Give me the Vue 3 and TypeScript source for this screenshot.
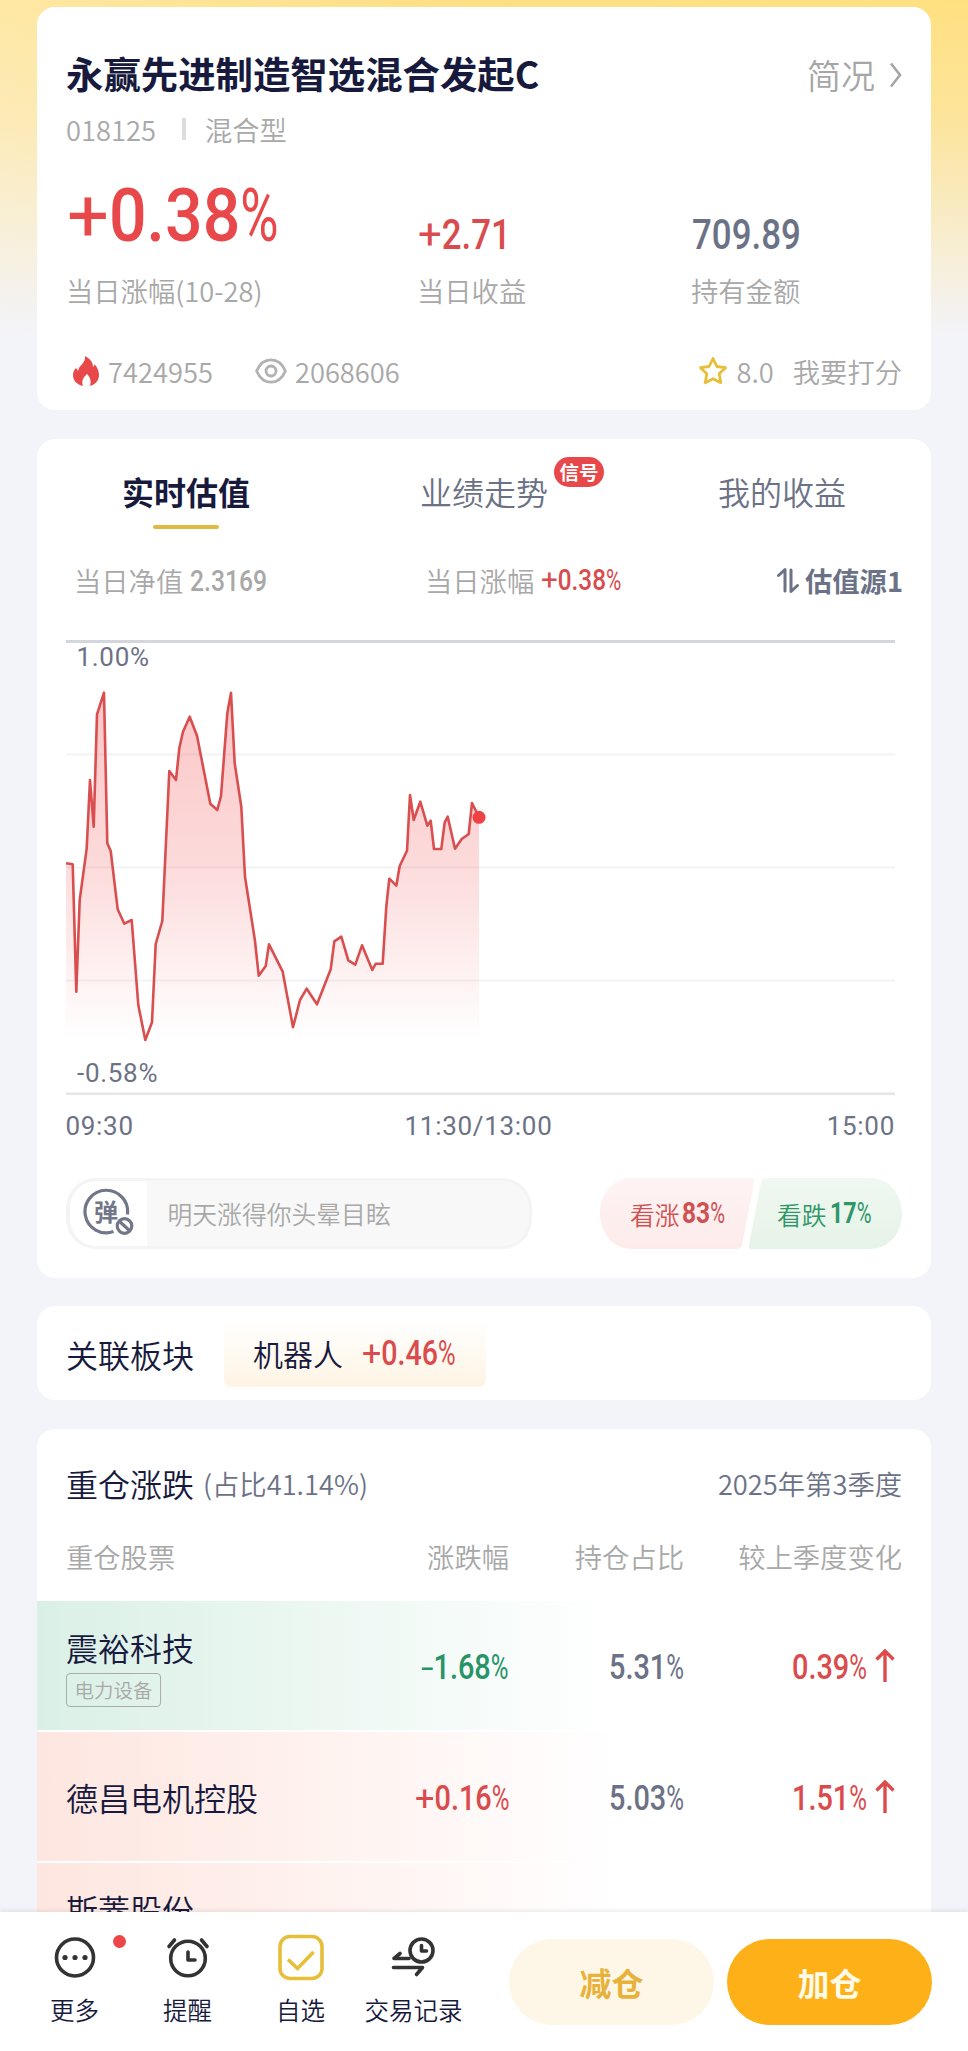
<script setup lang="ts">
import { h } from 'vue'

interface NumProps {
  value: string
  size: number
  weight?: number
  digit?: number
}

// Condensed figures: every run (sign, digits, percent) has its own advance width.
const Num = (props: NumProps) => {
  const { value, size, weight = 500, digit = 0.462 } = props
  const match = value.match(/^([+-]?)([\d.]+)(%?)$/)
  const [, sign, digits, pct] = match ?? ['', '', value, '']
  const dots = digits.split('.').length - 1
  const runs = [
    { t: sign, w: sign === '-' ? 0.36 : 0.56, k: 400 },
    { t: digits, w: (digits.length - dots) * digit + dots * 0.22, k: weight },
    { t: pct, w: 0.51, k: 400 },
  ].filter((r) => r.t)
  let x = 0
  const nodes = runs.map((r) => {
    const node = h(
      'text',
      { x, y: size * 0.711, 'font-weight': r.k, textLength: r.w * size, lengthAdjust: 'spacingAndGlyphs' },
      r.t,
    )
    x += r.w * size
    return node
  })
  return h('svg', { class: 'num', width: x, height: size * 0.711, 'font-size': size }, nodes)
}
Num.props = ['value', 'size', 'weight', 'digit']

const series: [number, number][] = [
  [0, 223.3], [6.7, 224.3], [10.3, 351.7], [13.7, 260], [20.7, 208.3], [24, 140], [27.7, 186.7],
  [31, 74.3], [38, 52.7], [41.3, 203.3], [44.7, 211], [51.7, 269.3], [58.3, 283.7], [65.7, 280],
  [72.3, 365], [79.3, 400], [86, 382.3], [89.7, 304], [96.3, 281], [103.3, 131], [110, 140],
  [113.3, 108.3], [117, 91.7], [123.7, 76.7], [131, 95.7], [144.3, 163.7], [151.3, 170], [155, 156],
  [161.3, 73.3], [165, 52.7], [168.7, 123.3], [175.3, 166.7], [179, 236.7], [189, 301],
  [192.7, 335.7], [199.7, 326], [203, 304.3], [216.7, 331.7], [227, 387.3], [234, 360],
  [240.7, 348.7], [251, 364.3], [264.7, 329.3], [268.3, 301.3], [275.3, 296.7], [282.3, 320.3],
  [289.3, 324.7], [296, 305.3], [306.3, 330], [309.7, 323.7], [316.7, 323.7], [320.3, 266.7],
  [323.3, 238.7], [330.3, 245.7], [333.7, 226], [341, 210.7], [344, 155], [347.7, 180],
  [354.3, 161.7], [361.3, 185.7], [364.7, 180.7], [368, 209], [375.3, 209], [378.7, 182.3],
  [381.7, 176.7], [389, 208.7], [395.7, 199], [402.7, 194], [406, 163], [413, 177.3],
]
const line = series.map((p) => p.join(',')).join(' ')
const area = `0,400 ${line} 413,400`

const metrics = [
  { value: '+0.38%', label: '当日涨幅(10-28)', size: 75, tone: 'up', big: true },
  { value: '+2.71', label: '当日收益', size: 42.5, tone: 'up', big: false },
  { value: '709.89', label: '持有金额', size: 42.5, tone: 'slate', big: false },
]

const stocks = [
  { name: '震裕科技', tag: '电力设备', change: '-1.68%', share: '5.31%', diff: '0.39%', tone: 'down' },
  { name: '德昌电机控股', tag: '', change: '+0.16%', share: '5.03%', diff: '1.51%', tone: 'up' },
  { name: '斯菱股份', tag: '电力设备', change: '', share: '', diff: '', tone: 'up' },
]
</script>

<template>
  <div class="page">
    <main class="content">
      <section class="card summary">
        <div class="title-row">
          <h1>永赢先进制造智选混合发起C</h1>
          <a class="brief">
            简况
            <svg width="13" height="26" viewBox="0 0 13 26"><path d="M2 1.5 11 13 2 24.5" /></svg>
          </a>
        </div>
        <div class="sub-row"><span>018125</span><i></i><span>混合型</span></div>
        <div class="metrics">
          <div v-for="m in metrics" :key="m.label" class="metric" :class="{ big: m.big }">
            <Num :class="m.tone" :value="m.value" :size="m.size" :digit="m.big ? 0.51 : 0.468" />
            <span>{{ m.label }}</span>
          </div>
        </div>
        <div class="stats">
          <svg class="flame" width="26" height="30" viewBox="0 0 26 30">
            <path d="M12 0c6 3 8 7 8 11 1-1 1.500-1.500 1.500-3C24.500 12 26 15 26 19c0 5-3 9-9 11 2-6-1-10-3-12-3 3-6 6-4 12C3 28 0 24 0 19c0-3 1-5 3-7 1 1 1.500 2 2 3C6 9 13 7 12 0Z" />
          </svg>
          <span class="heat">7424955</span>
          <svg class="eye" width="32" height="26" viewBox="0 0 32 26">
            <path d="M1.600 13C5 5 10 1.800 16 1.800S27 5 30.400 13C27 21 22 24.200 16 24.200S5 21 1.600 13Z" />
            <circle cx="16" cy="13" r="5" />
          </svg>
          <span>2068606</span>
          <svg class="star" width="30" height="30" viewBox="0 0 30 30">
            <path d="m15 2.500 3.900 8 8.600 1.200-6.300 6.100 1.600 8.900L15 22.700l-7.800 4 1.600-8.900-6.300-6.100 8.600-1.200Z" />
          </svg>
          <span class="score">8.0</span>
          <span>我要打分</span>
        </div>
      </section>

      <section class="card trend">
        <nav class="tabs">
          <div class="tab active"><span>实时估值</span></div>
          <div class="tab"><span>业绩走势<b class="badge">信号</b></span></div>
          <div class="tab"><span>我的收益</span></div>
        </nav>
        <div class="quote">
          <div class="nav-value">当日净值<Num value="2.3169" :size="29.500" :digit="0.478" /></div>
          <div class="nav-change">当日涨幅<Num class="up" value="+0.38%" :size="30" /></div>
          <div class="source">
            <svg width="22" height="27" viewBox="0 0 22 27">
              <path d="M1.500 8.500 8 2.500V24M14 3v21.500l6.500-6" />
            </svg>
            估值源1
          </div>
        </div>
        <svg class="chart" width="829" height="504" viewBox="0 0 829 504">
          <defs>
            <linearGradient id="fade" x1="0" y1="52" x2="0" y2="400" gradientUnits="userSpaceOnUse">
              <stop offset="0" stop-color="#f24a4c" stop-opacity=".32" />
              <stop offset=".5" stop-color="#f24a4c" stop-opacity=".2" />
              <stop offset="1" stop-color="#f24a4c" stop-opacity="0" />
            </linearGradient>
          </defs>
          <path class="grid" d="M0 114.500H829M0 227.500H829M0 340.500H829" />
          <path class="edge top" d="M0 1.500H829" />
          <path class="edge" d="M0 453.700H829" />
          <polygon :points="area" fill="url(#fade)" />
          <polyline class="curve" :points="line" />
          <circle cx="413" cy="177.300" r="6.500" class="dot" />
          <text x="10.500" y="26">1.00%</text>
          <text x="11" y="442">-0.58%</text>
          <text x="-0.500" y="495">09:30</text>
          <text x="412.500" y="495" text-anchor="middle">11:30/13:00</text>
          <text x="829" y="495" text-anchor="end">15:00</text>
        </svg>
        <div class="vote-row">
          <div class="danmu">
            <div class="danmu-switch">
              <svg width="54" height="50" viewBox="0 0 54 50">
                <path d="M45.400 26.500A21.300 21.300 0 1 0 31.500 43.600" />
                <circle cx="42.500" cy="38" r="7.300" />
                <path d="m37.300 33.200 10.400 9.600" />
                <text x="24" y="32.500" text-anchor="middle">弹</text>
              </svg>
            </div>
            <span>明天涨得你头晕目眩</span>
          </div>
          <div class="votes">
            <svg class="vote-bg" width="302" height="71" viewBox="0 0 302 71">
              <defs>
                <linearGradient id="bull" x1="0" y1="0" x2="0" y2="1">
                  <stop offset="0" stop-color="#fef3f3" /><stop offset="1" stop-color="#fdebeb" />
                </linearGradient>
                <linearGradient id="bear" x1="0" y1="0" x2="0" y2="1">
                  <stop offset="0" stop-color="#f0f8f1" /><stop offset="1" stop-color="#e6f3e8" />
                </linearGradient>
              </defs>
              <path fill="url(#bull)" d="M32 0H150Q155 0 154 5L142 67Q141 71 137 71H32C14 71 0 56 0 35.500S14 0 32 0Z" />
              <path fill="url(#bear)" d="M166 0H270C288 0 302 15 302 35.500S288 71 270 71H152Q148 71 149 67L161 4Q162 0 166 0Z" />
            </svg>
            <div class="vote bull">看涨<Num value="83%" :size="29" :weight="700" :digit="0.485" /></div>
            <div class="vote bear">看跌<Num value="17%" :size="29" :weight="700" :digit="0.46" /></div>
          </div>
        </div>
      </section>

      <section class="card sector">
        <span class="heading">关联板块</span>
        <div class="chip">机器人<Num class="up" value="+0.46%" :size="34.500" :digit="0.475" /></div>
      </section>

      <section class="card holdings">
        <div class="holdings-title">
          <span class="heading">重仓涨跌</span><span class="ratio">(占比41.14%)</span>
          <span class="quarter">2025年第3季度</span>
        </div>
        <div class="cols head">
          <span>重仓股票</span><span>涨跌幅</span><span>持仓占比</span><span>较上季度变化</span>
        </div>
        <div v-for="s in stocks" :key="s.name" class="cols row" :class="s.tone + '-row'">
          <div class="stock">
            <span class="name">{{ s.name }}</span>
            <span v-if="s.tag" class="tag">{{ s.tag }}</span>
          </div>
          <template v-if="s.change">
            <div><Num :class="s.tone" :value="s.change" :size="34.800" :digit="0.475" /></div>
            <div><Num class="slate" :value="s.share" :size="34.800" :digit="0.475" /></div>
            <div class="diff">
              <Num class="up" :value="s.diff" :size="34.800" :digit="0.475" />
              <svg class="arrow" width="20" height="34" viewBox="0 0 20 34">
                <path d="M10 33V2M1.500 10.500 10 2l8.500 8.500" />
              </svg>
            </div>
          </template>
        </div>
      </section>
    </main>

    <footer class="bar">
      <div class="action">
        <svg width="48" height="48" viewBox="0 0 48 48">
          <circle cx="24" cy="23.500" r="18.500" />
          <g class="solid"><circle cx="14" cy="23.500" r="2.600" /><circle cx="24" cy="23.500" r="2.600" /><circle cx="34" cy="23.500" r="2.600" /></g>
        </svg>
        <span>更多</span>
        <i class="notice"></i>
      </div>
      <div class="action">
        <svg width="48" height="48" viewBox="0 0 48 48">
          <circle cx="24" cy="24.500" r="17.300" />
          <path d="M24 18v8h7M5 12.500 10.500 6M43 12.500 37.500 6" />
        </svg>
        <span>提醒</span>
      </div>
      <div class="action">
        <svg class="gold" width="48" height="48" viewBox="0 0 48 48">
          <rect x="3" y="2.500" width="42" height="42" rx="10" />
          <path d="m11 25.500 9.500 9L36.500 18" />
        </svg>
        <span>自选</span>
      </div>
      <div class="action">
        <svg width="48" height="48" viewBox="0 0 48 48">
          <circle cx="31.500" cy="16.500" r="11.500" />
          <path d="M31.500 11.500v5.500h5M19 24.500H4l6-5M3.500 33.500h29l-6 7" />
        </svg>
        <span>交易记录</span>
      </div>
      <button class="btn reduce">减仓</button>
      <button class="btn add">加仓</button>
    </footer>
  </div>
</template>

<style>
body {
  margin: 0;
}
</style>

<style scoped>
.page {
  width: 968px;
  height: 2051px;
  overflow: hidden;
  display: flex;
  flex-direction: column;
  font-family: 'Noto Sans CJK SC', 'Noto Sans', sans-serif;
  font-weight: 350;
  color: #171a3d;
  background:
    linear-gradient(180deg, rgba(243, 244, 250, 0) 0, rgba(243, 244, 250, 0.22) 120px, #f3f4fa 338px),
    linear-gradient(90deg, #ffe8a4, #ffdf86 45%, #ffe081);
  background-color: #f3f4fa;
}
.content {
  height: 1912px;
  padding: 7px 37px 0;
  box-sizing: border-box;
  overflow: hidden;
}
.card {
  background: #fff;
  border-radius: 18px;
  box-sizing: border-box;
  padding: 0 29px;
}
.up { color: #d94b4d; }
.down { color: #279467; }
.slate { color: #6c7286; }
.num {
  display: block;
  overflow: visible;
  fill: currentColor;
  font-family: Roboto, sans-serif;
  flex: none;
}

.summary { height: 403px; padding-top: 41px; }
.title-row { height: 50px; display: flex; align-items: center; justify-content: space-between; }
h1 { margin: 0; font-size: 37.4px; line-height: 50px; font-weight: 700; }
.brief { display: flex; align-items: center; font-size: 34px; line-height: 50px; color: #a6a6a6; padding: 4px 0 0; }
.brief svg { margin-left: 14px; fill: none; stroke: #a6a6a6; stroke-width: 2.600; }
.sub-row { height: 40px; margin-top: 11px; display: flex; align-items: center; font-size: 27.3px; color: #a8a8a8; }
.sub-row i { width: 4px; height: 22px; margin: 0 19px 0 26px; background: #dcdcdc; }
.metrics { display: grid; grid-template-columns: 351px 274px 1fr; height: 161px; }
.metric { display: flex; flex-direction: column; justify-content: flex-end; font-size: 27.3px; line-height: 40px; color: #a8a8a8; }
.metric .num { margin: 0 0 21px 1px; }
.metric.big .num { margin-bottom: 29px; }
.metric.big .up { color: #e8484a; }
.stats { display: flex; align-items: center; height: 40px; margin-top: 41px; font-size: 27.3px; color: #a8a8a8; }
.flame { fill: #e8484a; margin: 0 9px 0 7px; }
.heat { margin-right: 42px; }
.eye { fill: none; stroke: #b2b2b2; stroke-width: 2.800; margin-right: 8px; }
.star { fill: none; stroke: #e5bf3a; stroke-width: 2.800; stroke-linejoin: round; margin: 0 8px 0 auto; }
.score { margin-right: 19px; }

.trend { height: 839px; margin-top: 29px; }
.tabs { display: grid; grid-template-columns: repeat(3, 1fr); margin: 0 -29px; height: 91px; }
.tab { display: flex; flex-direction: column; align-items: center; padding-top: 27px; font-size: 32px; line-height: 50px; color: #6c7286; }
.tab span { position: relative; }
.tab.active { font-weight: 700; color: #171a3d; }
.tab.active::after { content: ''; width: 66px; height: 4px; border-radius: 2px; margin-top: 9px; background: #dfb943; }
.badge { position: absolute; left: 134px; top: -9px; width: 50px; height: 30px; border-radius: 15px; background: #e8484a; color: #fff; font-size: 19.5px; line-height: 29px; text-align: center; }
.quote { display: flex; align-items: center; height: 40px; margin-top: 30px; font-size: 27.3px; color: #a8a8a8; }
.quote > div { display: flex; align-items: center; }
.quote .num { margin-left: 7px; }
.nav-value { width: 351px; padding-left: 8px; box-sizing: border-box; }
.nav-change { padding-left: 8px; }
.source { margin: 0 -1px 0 auto; color: #6c7286; font-weight: 700; }
.source svg { margin-right: 6px; fill: none; stroke: #6c7286; stroke-width: 3; stroke-linecap: round; stroke-linejoin: round; }
.chart { display: block; margin-top: 40px; overflow: visible; }
.chart text { font: 400 26px Roboto, sans-serif; letter-spacing: 0.7px; fill: #6c7286; }
.grid { stroke: #f1f3f5; stroke-width: 2; }
.edge { stroke: #e4e6ea; stroke-width: 2.500; }
.edge.top { stroke: #d3d6da; stroke-width: 3; }
.curve { fill: none; stroke: #d94e4f; stroke-width: 2.600; stroke-linejoin: round; }
.dot { fill: #ee4244; }
.vote-row { display: flex; justify-content: space-between; margin-top: 34px; }
.danmu { display: flex; align-items: center; width: 466px; height: 71px; box-sizing: border-box; border: 3px solid #f4f4f4; border-left-width: 4px; border-radius: 30px; background: #f8f8f8; overflow: hidden; font-size: 24.8px; color: #a8a8a8; }
.danmu-switch { width: 77px; height: 65px; background: #fff; margin-right: 20.5px; }
.danmu-switch svg { display: block; margin: 7px 0 0 12px; fill: none; stroke: #717689; stroke-width: 3.200; }
.danmu-switch text { fill: #717689; stroke: none; font-size: 24px; font-weight: 700; }
.danmu > span { margin-top: -1px; }
.votes { position: relative; display: flex; width: 302px; height: 71px; }
.vote-bg { position: absolute; inset: 0; }
.vote { position: relative; display: flex; align-items: center; font-size: 24.8px; width: 147px; padding-left: 30px; box-sizing: border-box; }
.vote .num { margin: -2px 0 0 2px; }
.bull { color: #cf5253; }
.bear { color: #2f9668; }
.bear .num { margin-left: 3px; }

.sector { display: flex; height: 94px; margin-top: 28px; }
.heading { font-size: 32px; line-height: 50px; }
.sector .heading { margin-top: 23px; }
.chip { display: flex; align-items: center; width: 262px; height: 68px; box-sizing: border-box; margin: 13px 0 0 30px; padding: 0 0 0 29px; font-size: 30px; border-radius: 7px; background: linear-gradient(#fff, #fef4e4); }
.chip .num { margin: -2px 0 0 19px; }

.holdings { height: 700px; margin-top: 29px; border-radius: 18px 18px 0 0; }
.holdings-title { display: flex; align-items: center; height: 50px; padding-top: 29px; }
.ratio { font-size: 27.3px; margin-left: 9px; color: #6c7286; }
.quarter { margin-left: auto; font-size: 27.3px; color: #6c7286; }
.cols { display: grid; grid-template-columns: 1fr 200px 175px 218px; align-items: center; margin: 0 -29px; padding: 0 29px; justify-items: end; }
.cols > :first-child { justify-self: start; }
.head { height: 40px; margin-top: 28px; padding-bottom: 25px; font-size: 27.3px; color: #a8a8a8; }
.row { height: 129px; margin-bottom: 2px; }
.row .num { position: relative; top: 1px; }
.down-row { background: linear-gradient(90deg, #daf0e6, #fff 64%); }
.up-row { background: linear-gradient(90deg, #fee6e0, #fff 65%); }
.stock { display: flex; flex-direction: column; align-items: flex-start; }
.name { font-size: 32px; line-height: 46px; }
.tag { box-sizing: border-box; height: 34px; margin-top: 3px; padding: 0 7.5px; border: 1.5px solid #a9adab; border-radius: 4px; font-size: 19.5px; line-height: 32px; color: #a8a8a8; }
.diff { display: flex; align-items: center; }
.arrow { fill: none; stroke: #dd4b4c; stroke-width: 3.400; margin: 0 7px 0 8px; }

.bar { position: relative; height: 139px; background: #fff; box-shadow: 0 -2px 4px rgba(40, 40, 60, 0.08); display: flex; padding-left: 18px; }
.action { position: relative; width: 113px; display: flex; flex-direction: column; align-items: center; font-size: 24.5px; line-height: 36px; white-space: nowrap; }
.action svg { margin-top: 22px; fill: none; stroke: #333; stroke-width: 3.600; stroke-linecap: round; stroke-linejoin: round; }
.action .solid { fill: #333; stroke: none; }
.action .gold { stroke: #e5bf3a; stroke-linecap: butt; stroke-linejoin: miter; }
.action span { margin-top: 10px; }
.notice { position: absolute; left: 95px; top: 23px; width: 13px; height: 13px; border-radius: 50%; background: #ee4648; }
.btn { width: 205px; height: 86px; margin: 27px 0 0; padding: 0; border: 0; border-radius: 43px; font: 700 32px/86px 'Noto Sans CJK SC', sans-serif; }
.reduce { margin-left: 39px; background: #fef6e7; color: #e8b23a; }
.add { margin-left: 13px; background: #fdb018; color: #fffbe8; }
</style>
